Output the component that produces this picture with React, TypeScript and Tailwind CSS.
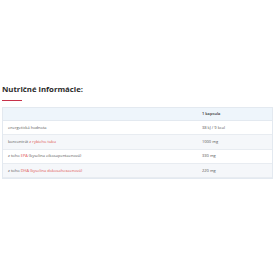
import React from "react";

const rows: { label: React.ReactNode; value: string; striped: boolean }[] = [
  { label: <>energetická hodnota</>, value: "38 kJ / 9 kcal", striped: false },
  {
    label: (
      <>
        koncentrát <span className="text-[#e0504f]">z rybieho tuku</span>
      </>
    ),
    value: "1000 mg",
    striped: true,
  },
  {
    label: (
      <>
        z toho <span className="text-[#e0504f]">EPA</span> (kyselina eikosapentaenová)
      </>
    ),
    value: "330 mg",
    striped: false,
  },
  {
    label: (
      <>
        z toho <span className="text-[#e0504f]">DHA (kyselina dokosahexaenová)</span>
      </>
    ),
    value: "220 mg",
    striped: true,
  },
];

export default function App() {
  return (
    <div
      className="w-[278px] h-[265px] bg-white pt-[84px] pl-[2px] pr-[5px]"
      style={{ fontFamily: '"Open Sans", "Noto Sans", sans-serif' }}
    >
      <h2 className="text-[7.8px] leading-[10px] font-bold text-[#2b2b2b]">Nutričné informácie:</h2>
      <div className="mt-[6px] h-[1px] w-[20px] bg-[#c8324a]" />
      <div className="mt-[6px] border border-[#e3e9f0] text-[4px] text-[#555]">
        <div className="flex h-[13px] items-center bg-[#eef5fb] border-b border-[#e3e9f0]">
          <div className="w-[199px] pl-[5px]" />
          <div className="font-semibold text-[#333]">1 kapsula</div>
        </div>
        {rows.map((r, i) => (
          <div
            key={i}
            className={`flex h-[14.3px] items-center border-b border-[#e8ecf1] ${r.striped ? "bg-[#f5f7fa]" : "bg-white"}`}
          >
            <div className="w-[199px] pl-[5px]">{r.label}</div>
            <div>{r.value}</div>
          </div>
        ))}
      </div>
    </div>
  );
}
